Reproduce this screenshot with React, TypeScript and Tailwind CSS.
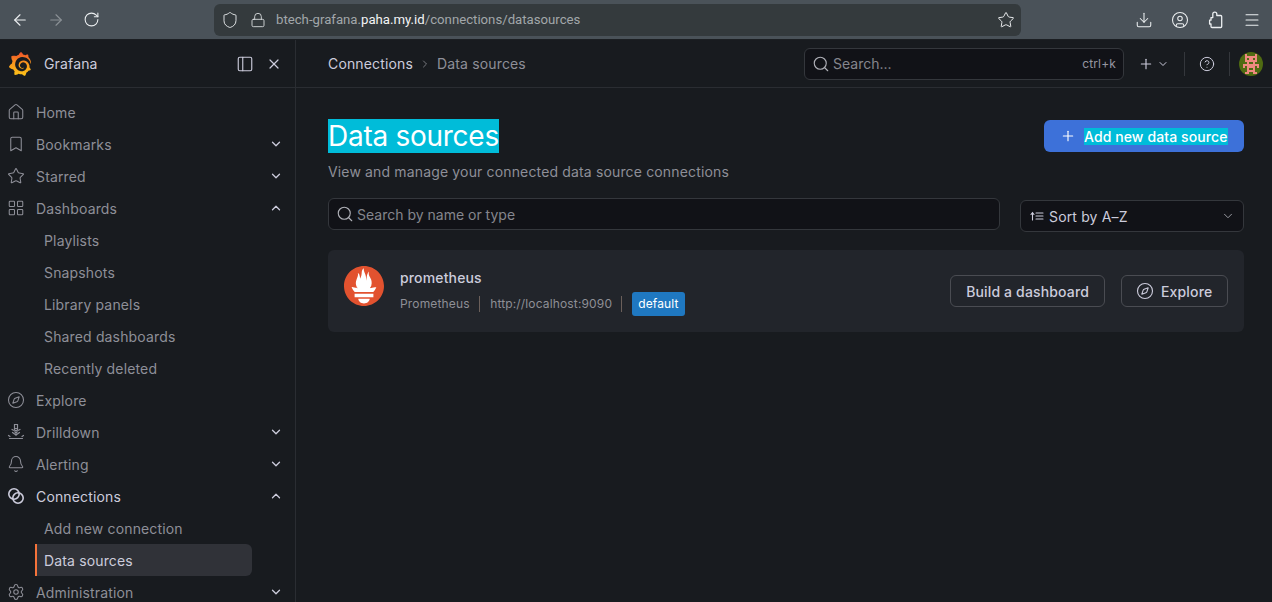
import React from "react";
import { ArrowLeft, ArrowRight, RotateCw, Shield, Lock, Star, Download, CircleUser, Menu, Search, Plus, ChevronDown, ChevronUp, ChevronRight, CircleHelp, House, Bookmark, LayoutGrid, Compass, Bell, Settings, X, PanelLeft } from "lucide-react";
import { SiGrafana } from "react-icons/si";

const Grafana = () => (
  <span className="w-6 h-6 shrink-0 flex items-center justify-center">
    <svg width="0" height="0" className="absolute">
      <defs>
        <linearGradient id="gf" x1="0" y1="1" x2="0" y2="0">
          <stop offset="0" stopColor="#fcc419" />
          <stop offset="0.55" stopColor="#f7941d" />
          <stop offset="1" stopColor="#ef4e2b" />
        </linearGradient>
      </defs>
    </svg>
    <SiGrafana size={24} fill="url(#gf)" />
  </span>
);

const Prometheus = () => (
  <svg width="40" height="40" viewBox="0 0 24 24">
    <circle cx="12" cy="12" r="11" fill="#fff" />
    <path fill="#e2522f" d="M12 0C5.373 0 0 5.372 0 12c0 6.627 5.373 12 12 12s12-5.373 12-12c0-6.628-5.373-12-12-12zm0 22.46c-1.885 0-3.414-1.26-3.414-2.814h6.828c0 1.553-1.528 2.813-3.414 2.813zm5.64-3.745H6.36v-2.046h11.28v2.046zm-.04-3.098H6.391c-.037-.043-.075-.086-.111-.13-1.155-1.401-1.427-2.133-1.69-2.879-.005-.025 1.4.287 2.395.511 0 0 .513.119 1.262.255-.72-.843-1.147-1.915-1.147-3.01 0-2.406 1.845-4.508 1.18-6.207.648.053 1.34 1.367 1.387 3.422.689-.951.977-2.69.977-3.755 0-1.103.727-2.385 1.454-2.429-.648 1.069.168 1.984.894 4.256.272.854.237 2.29.447 3.201.07-1.892.395-4.652 1.595-5.605-.529 1.2.079 2.702.494 3.424.671 1.164 1.078 2.047 1.078 3.716a4.642 4.642 0 0 1-1.11 2.996c.792-.149 1.34-.283 1.34-.283l2.573-.502s-.374 1.538-1.81 3.019z" />
  </svg>
);

const Drill = () => (
  <svg width="18" height="18" viewBox="0 0 18 18" fill="none" stroke="currentColor" strokeWidth="1.2" strokeLinecap="round">
    <path d="M7.5 1.5h3v4h-3zM7.5 5.5l.3 2h2.4l.3-2M7.8 7.5l.4 2h1.600l.4-2M9 9.500V12" />
    <path d="M5 6.500l1.500.8M13 6.500l-1.500.8M5.500 9.500L9 12l3.500-2.500" />
    <path d="M2.500 15.500h13M1.500 12.500l1.500 1M16.500 12.500l-1.500 1" />
  </svg>
);

const ConnIcon = () => (
  <svg width="18" height="18" viewBox="0 0 18 18" fill="none" stroke="currentColor" strokeWidth="1.6">
    <circle cx="7" cy="7" r="5.2" />
    <circle cx="11" cy="11" r="5.2" />
  </svg>
);

const SortIcon = () => (
  <svg width="16" height="16" viewBox="0 0 16 16" fill="none" stroke="currentColor" strokeWidth="1.1" strokeLinecap="round">
    <path d="M3.500 12V5M2 6.500l1.500-1.800L5 6.500M7 5h7M7 8h7M7 11h7" />
  </svg>
);

const PuzzleIcon = () => (
  <svg width="18" height="18" viewBox="0 0 18 18" fill="none" stroke="currentColor" strokeWidth="1.3" strokeLinejoin="round" className="shrink-0">
    <path d="M7.800 1.200c1.200 0 2 .8 2 1.900v1.400h3.900a1 1 0 0 1 1 1v10a1 1 0 0 1-1 1H5a1 1 0 0 1-1-1v-2.500H2.600V9.200H4V6.600h1.800V3.100c0-1.100.8-1.900 2-1.900z" />
  </svg>
);

const Avatar = () => {
  const g = "#4f6b12";
  const p = "#f08a80";
  const rows = [
    "............",
    "...p....p...",
    "...pppppp...",
    "...p.pp.p...",
    "...pppppp...",
    "....p..p....",
    "..pppppppp..",
    "..p.pppp.p..",
    "....p..p....",
    "....pppp....",
    "...pp..pp...",
    "............",
  ];
  return (
    <svg width="24" height="24" viewBox="0 0 12 12" shapeRendering="crispEdges" className="rounded-full">
      <rect width="12" height="12" fill={g} />
      {rows.map((r, y) => r.split("").map((c, x) => (c === "p" ? <rect key={`${x}-${y}`} x={x} y={y} width="1" height="1" fill={p} /> : null)))}
    </svg>
  );
};

type Item = { label: string; icon?: React.ReactNode; chev?: "down" | "up"; sub?: boolean; active?: boolean; lit?: boolean };

const items: Item[] = [
  { label: "Home", icon: <House size={18} strokeWidth={1.4} /> },
  { label: "Bookmarks", icon: <Bookmark size={18} strokeWidth={1.4} />, chev: "down" },
  { label: "Starred", icon: <Star size={18} strokeWidth={1.4} />, chev: "down" },
  { label: "Dashboards", icon: <LayoutGrid size={18} strokeWidth={1.4} />, chev: "up" },
  { label: "Playlists", sub: true },
  { label: "Snapshots", sub: true },
  { label: "Library panels", sub: true },
  { label: "Shared dashboards", sub: true },
  { label: "Recently deleted", sub: true },
  { label: "Explore", icon: <Compass size={18} strokeWidth={1.4} /> },
  { label: "Drilldown", icon: <Drill />, chev: "down" },
  { label: "Alerting", icon: <Bell size={18} strokeWidth={1.4} />, chev: "down" },
  { label: "Connections", icon: <ConnIcon />, chev: "up", lit: true },
  { label: "Add new connection", sub: true },
  { label: "Data sources", sub: true, active: true },
  { label: "Administration", icon: <Settings size={18} strokeWidth={1.4} />, chev: "down" },
];

function NavRow({ item }: { item: Item }) {
  if (item.sub) {
    return (
      <div className="h-8 pl-[35px] w-[252px] shrink-0">
        <div className={`h-8 flex items-center rounded-r-md ${item.active ? "bg-[#303238] border-l-[2px] border-[#f5733a] pl-[7px] text-[#ccccdc]" : "pl-[9px] text-[#8e8f98]"}`}>
          {item.label}
        </div>
      </div>
    );
  }
  return (
    <div className={`h-8 shrink-0 flex items-center pl-[7px] pr-[12px] ${item.lit ? "text-[#ccccdc]" : "text-[#8e8f98]"}`}>
      <span className="w-[18px] h-[18px] flex items-center justify-center">{item.icon}</span>
      <span className="ml-[11px] flex-1">{item.label}</span>
      {item.chev === "down" && <ChevronDown size={14} strokeWidth={2.2} className="text-[#ccccdc]" />}
      {item.chev === "up" && <ChevronUp size={14} strokeWidth={2.2} className="text-[#ccccdc]" />}
    </div>
  );
}

export default function App() {
  return (
    <div className="w-[1272px] h-[602px] overflow-hidden flex flex-col bg-[#181b1f] text-[14px] font-['Inter',sans-serif] tracking-[0.15px]">
      <div className="h-[40px] shrink-0 flex items-center bg-[#4a5259] border-b border-[#1c1f23] text-[#eceff1]">
        <div className="w-[214px] flex items-center pl-[11px] gap-[18px] shrink-0">
          <ArrowLeft size={18} strokeWidth={1.5} />
          <ArrowRight size={18} strokeWidth={1.5} className="opacity-40" />
          <RotateCw size={17} strokeWidth={1.5} />
        </div>
        <div className="w-[807px] h-[32px] rounded-md bg-[#343a3d] flex items-center pl-[7px] pr-[6px] shrink-0 font-['Roboto',sans-serif] text-[13.2px] tracking-normal">
          <Shield size={18} strokeWidth={1.3} className="text-[#dfe2e4]" />
          <Lock size={16} strokeWidth={1.3} className="ml-[11px] text-[#dfe2e4]" />
          <span className="ml-[10px] flex-1 text-[#a2a7aa]">
            btech-grafana.<span className="text-[#f3f4f5]">paha.my.id</span>/connections/datasources
          </span>
          <Star size={18} strokeWidth={1.3} />
        </div>
        <div className="flex-1 flex items-center justify-end pr-[11px] gap-[18px]">
          <Download size={18} strokeWidth={1.4} />
          <CircleUser size={18} strokeWidth={1.4} />
          <PuzzleIcon />
          <Menu size={18} strokeWidth={1.4} />
        </div>
      </div>

      <div className="flex flex-1 min-h-0">
        <aside className="w-[296px] shrink-0 border-r border-[#2a2d32] flex flex-col overflow-hidden">
          <div className="h-[48px] shrink-0 border-b border-[#2a2d32] flex items-center pl-[8px] pr-[13px] text-[#ccccdc]">
            <Grafana />
            <span className="ml-[12px] flex-1">Grafana</span>
            <PanelLeft size={18} strokeWidth={1.5} className="text-[#ccccdc]" />
            <X size={16} strokeWidth={1.8} className="ml-[12px] text-[#ccccdc]" />
          </div>
          <nav className="pt-[8px] flex flex-col">
            {items.map((it) => (
              <NavRow key={it.label} item={it} />
            ))}
          </nav>
        </aside>

        <main className="flex-1 min-w-0 flex flex-col">
          <div className="h-[48px] shrink-0 border-b border-[#2a2d32] flex items-center pl-[32px] pr-[9px]">
            <span className="text-[#ccccdc]">Connections</span>
            <ChevronRight size={12} strokeWidth={1.6} className="mx-[6px] text-[#8e8f96]" />
            <span className="text-[#8e8f98]">Data sources</span>
            <div className="ml-auto w-[320px] h-[32px] rounded-md border border-[#34373c] bg-[#111217] flex items-center pl-[7px] pr-[7px] text-[#85868d]">
              <Search size={18} strokeWidth={1.5} className="text-[#b0b1b8]" />
              <span className="ml-[3px] flex-1 tracking-normal">Search...</span>
              <span className="text-[12px] text-[#ccccdc] opacity-70">ctrl+k</span>
            </div>
            <Plus size={16} strokeWidth={1.7} className="ml-[14px] text-[#ccccdc]" />
            <ChevronDown size={12} strokeWidth={2} className="ml-[3px] text-[#ccccdc]" />
            <div className="w-px h-6 bg-[#34373c] ml-[15px]" />
            <CircleHelp size={16} strokeWidth={1.5} className="ml-[14px] text-[#ccccdc]" />
            <div className="w-px h-6 bg-[#34373c] ml-[14px]" />
            <span className="ml-[9px]">
              <Avatar />
            </span>
          </div>

          <div className="pl-[32px] pr-[28px] flex-1">
            <div className="flex justify-between items-start pt-[31px]">
              <div>
                <h1 className="text-[28px] leading-[34px] font-normal text-white bg-[#00bcd9] w-fit tracking-[-0.27px]">Data sources</h1>
                <p className="mt-[8px] text-[#8e8f98] leading-[22px]">View and manage your connected data source connections</p>
              </div>
              <div className="w-[200px] h-[32px] mt-[1px] rounded-md bg-[#3d71d9] flex items-center pl-[16px] text-white font-medium">
                <Plus size={16} strokeWidth={1.7} />
                <span className="ml-[8px] bg-[#00bcd9] leading-[17px] tracking-[0.1px]">Add new data source</span>
              </div>
            </div>

            <div className="flex items-start mt-[15px] gap-[20px]">
              <div className="w-[672px] h-[32px] rounded-md border border-[#34373c] bg-[#111217] flex items-center pl-[7px] pr-[8px] text-[#85868d]">
                <Search size={18} strokeWidth={1.5} className="text-[#b0b1b8]" />
                <span className="ml-[3px] tracking-normal">Search by name or type</span>
              </div>
              <div className="w-[224px] h-[32px] mt-[2px] rounded-md border border-[#34373c] bg-[#111217] flex items-center px-[8px] text-[#ccccdc]">
                <SortIcon />
                <span className="ml-[4px] flex-1">Sort by A–Z</span>
                <ChevronDown size={14} strokeWidth={1.7} className="text-[#9a9ba2]" />
              </div>
            </div>

            <div className="mt-[18px] h-[82px] rounded-md bg-[#22252b] flex items-center pl-[16px] pr-[16px]">
              <div className="self-start mt-[16px]">
                <Prometheus />
              </div>
              <div className="ml-[16px] flex-1 pt-[2px]">
                <div className="text-[#ccccdc] font-medium leading-[20px]">prometheus</div>
                <div className="flex items-center mt-[4px] text-[12px] text-[#8e8f96]">
                  <span>Prometheus</span>
                  <span className="w-px h-4 bg-[#6b5f5a] ml-[9.5px] mr-[10px]" />
                  <span>http://localhost:9090</span>
                  <span className="w-px h-4 bg-[#6b5f5a] ml-[9px] mr-[10px]" />
                  <span className="h-6 px-[6px] rounded-[3px] bg-[#1f78c1] text-white flex items-center">default</span>
                </div>
              </div>
              <div className="h-[32px] px-[15px] rounded-md border border-[#4a4c52] flex items-center text-[#ccccdc] font-medium">Build a dashboard</div>
              <div className="ml-[16px] h-[32px] w-[107px] pl-[14px] rounded-md border border-[#4a4c52] flex items-center text-[#ccccdc] font-medium">
                <Compass size={18} strokeWidth={1.5} />
                <span className="ml-[7px]">Explore</span>
              </div>
            </div>
          </div>
        </main>
      </div>
    </div>
  );
}
